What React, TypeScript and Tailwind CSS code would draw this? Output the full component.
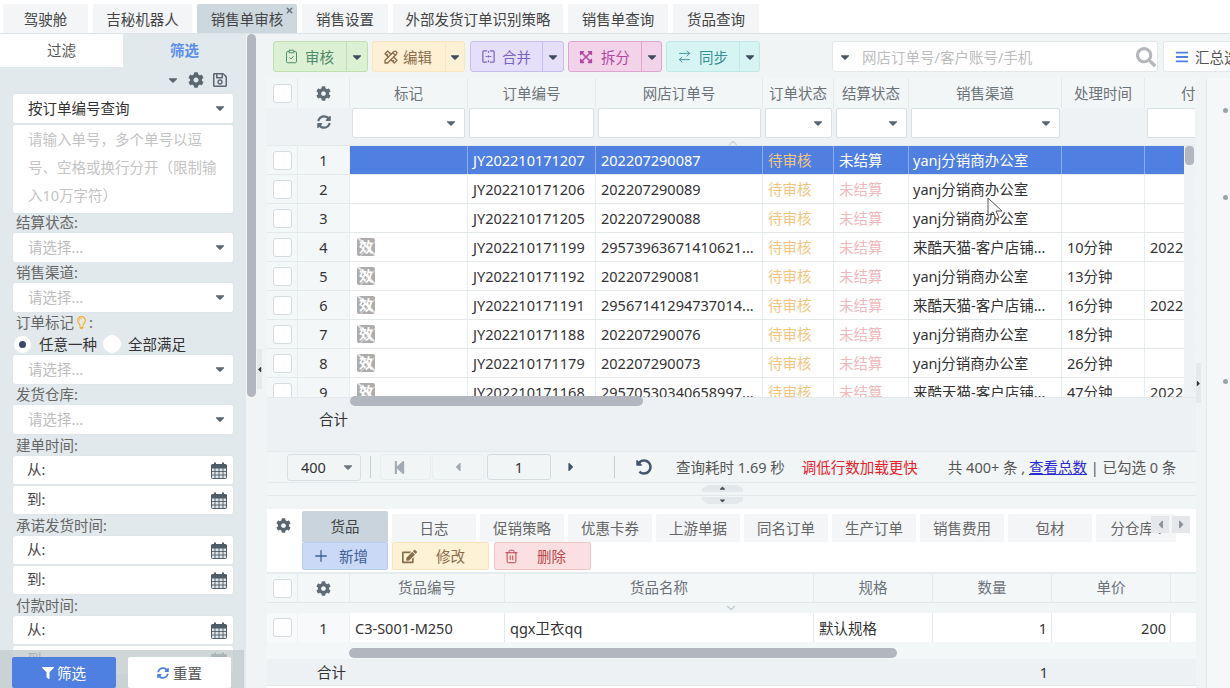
import type { ReactNode } from "react";
import { ArrowRightLeft, ChevronDown, ChevronUp, ClipboardCheck, Plus, Trash2, X } from "lucide-react";
import {
  FaBars,
  FaCaretDown,
  FaCaretLeft,
  FaCaretRight,
  FaCog,
  FaEdit,
  FaExpandArrowsAlt,
  FaFilter,
  FaRegLightbulb,
  FaRegSave,
  FaSearch,
  FaStepBackward,
  FaSyncAlt,
  FaUndoAlt,
} from "react-icons/fa";
import { TbTools } from "react-icons/tb";

const TOP_TABS = [
  { label: "驾驶舱", w: "w-[85px]" },
  { label: "吉秘机器人", w: "w-[99px]" },
  { label: "销售单审核", w: "w-[100px]", active: true },
  { label: "销售设置", w: "w-[86px]" },
  { label: "外部发货订单识别策略", w: "w-[170px]" },
  { label: "销售单查询", w: "w-[100px]" },
  { label: "货品查询", w: "w-[86px]" },
];

const SUB_TABS = [
  { label: "日志", w: "w-[84px]" },
  { label: "促销策略", w: "w-[84px]" },
  { label: "优惠卡券", w: "w-[84px]" },
  { label: "上游单据", w: "w-[84px]" },
  { label: "同名订单", w: "w-[84px]" },
  { label: "生产订单", w: "w-[84px]" },
  { label: "销售费用", w: "w-[84px]" },
  { label: "包材", w: "w-[84px]" },
  { label: "分仓库 :", w: "w-[80px]" },
];

const YANJ = "yanj分销商办公室";
const LAIKU = "来酷天猫-客户店铺...";

const ROWS = [
  { no: "JY202210171207", shop: "202207290087", channel: YANJ, time: "", pay: "" },
  { no: "JY202210171206", shop: "202207290089", channel: YANJ, time: "", pay: "" },
  { no: "JY202210171205", shop: "202207290088", channel: YANJ, time: "", pay: "" },
  { no: "JY202210171199", shop: "29573963671410621...", channel: LAIKU, time: "10分钟", pay: "2022", flag: true },
  { no: "JY202210171192", shop: "202207290081", channel: YANJ, time: "13分钟", pay: "", flag: true },
  { no: "JY202210171191", shop: "29567141294737014...", channel: LAIKU, time: "16分钟", pay: "2022", flag: true },
  { no: "JY202210171188", shop: "202207290076", channel: YANJ, time: "18分钟", pay: "", flag: true },
  { no: "JY202210171179", shop: "202207290073", channel: YANJ, time: "26分钟", pay: "", flag: true },
  { no: "JY202210171168", shop: "29570530340658997...", channel: LAIKU, time: "47分钟", pay: "2022", flag: true },
];

const MAIN_COLS = "grid grid-cols-[31px_52px_118px_128px_167px_71px_75px_153px_83px_50px]";
const SUB_COLS = "grid grid-cols-[31px_52px_155px_309px_119px_119px_119px_24px]";

function Check() {
  return <span className="block h-[19px] w-[19px] rounded-[3px] border border-[#d5dcdf] bg-white" />;
}

function CalendarIcon() {
  return (
    <svg viewBox="0 0 16 17" className="h-[17px] w-[16px] text-[#4f5c68]" fill="none" stroke="currentColor">
      <rect x="0.500" y="2.500" width="15" height="14" rx="1" fill="#dfe4e8" />
      <path d="M0.500 3h15v3h-15z" fill="currentColor" />
      <path d="M4 0.500v3M12 0.500v3" strokeWidth="2" />
      <path d="M0.500 9.500h15M0.500 13h15M4 6v10M8 6v10M12 6v10" strokeWidth="0.900" />
    </svg>
  );
}

function Select({ placeholder, value }: { placeholder?: string; value?: string }) {
  return (
    <div className="mx-[13px] flex h-[29px] items-center justify-between rounded-[2px] bg-white pb-[1px] pl-[15px] pr-[6px] shadow-[0_0_1px_#c4ced2]">
      <span className={value ? "text-[#333]" : "text-[#bdbdbd]"}>{value ?? placeholder}</span>
      <FaCaretDown className="h-[14px] w-[14px] text-[#5a6670]" />
    </div>
  );
}

function Label({ children, h = "h-[20px]" }: { children: ReactNode; h?: string }) {
  return <div className={`${h} flex items-center pl-[16px] leading-none text-[#666]`}>{children}</div>;
}

function DateField({ label }: { label: string }) {
  return (
    <div className="mx-[13px] flex h-[28px] items-center justify-between rounded-[2px] bg-white pl-[14px] pr-[6px] shadow-[0_0_1px_#c4ced2]">
      <span className="pb-[2px] text-[#444]">{label}:</span>
      <CalendarIcon />
    </div>
  );
}

function Sidebar() {
  return (
    <aside className="relative h-full w-[246px] shrink-0 overflow-hidden bg-[#e2e9ec]">
      <div className="flex h-[33px]">
        <div className="flex w-[123px] items-center justify-center bg-white pb-[2px] text-[#555]">过滤</div>
        <div className="flex w-[123px] items-center justify-center pb-[2px] font-bold text-[#5b8de8]">筛选</div>
      </div>
      <div className="flex h-[27px] items-center justify-end gap-[8px] pb-[2px] pr-[18px]">
        <FaCaretDown className="h-[14px] w-[14px] text-[#5a6670]" />
        <FaCog className="h-[16px] w-[16px] text-[#5a6670]" />
        <FaRegSave className="h-[16px] w-[16px] text-[#5a6670]" />
      </div>
      <Select value="按订单编号查询" />
      <div className="mx-[13px] mt-[2px] h-[88px] whitespace-nowrap rounded-[2px] bg-white pl-[15px] leading-[28px] text-[#c4c4c4] shadow-[0_0_1px_#c4ced2]">
        <div>请输入单号，多个单号以逗</div>
        <div>号、空格或换行分开（限制输</div>
        <div>入10万字符）</div>
      </div>
      <Label h="h-[20px] pb-[1px]">结算状态:</Label>
      <Select placeholder="请选择..." />
      <Label h="h-[21px]">销售渠道:</Label>
      <Select placeholder="请选择..." />
      <Label h="h-[21px]">
        订单标记
        <FaRegLightbulb className="mx-[1px] h-[13px] w-[13px] text-[#f4b32a]" />:
      </Label>
      <div className="flex h-[22px] items-center pl-[14px] text-[#333]">
        <span className="flex h-[17px] w-[17px] items-center justify-center rounded-full bg-white">
          <span className="h-[7px] w-[7px] rounded-full bg-[#3c4a63]" />
        </span>
        <span className="ml-[8px]">任意一种</span>
        <span className="ml-[6px] h-[18px] w-[18px] rounded-full bg-white" />
        <span className="ml-[7px]">全部满足</span>
      </div>
      <Select placeholder="请选择..." />
      <Label h="h-[21px]">发货仓库:</Label>
      <Select placeholder="请选择..." />
      <Label h="h-[22px]">建单时间:</Label>
      <div className="flex flex-col gap-[2px]">
        <DateField label="从" />
        <DateField label="到" />
      </div>
      <Label h="h-[22px]">承诺发货时间:</Label>
      <div className="flex flex-col gap-[2px]">
        <DateField label="从" />
        <DateField label="到" />
      </div>
      <Label h="h-[22px]">付款时间:</Label>
      <div className="flex flex-col gap-[2px]">
        <DateField label="从" />
        <DateField label="到" />
      </div>
      <div className="absolute bottom-0 left-0 flex h-[38px] w-[244px] items-start justify-between bg-[#c3ccce]/80 pl-[12px] pr-[13px] pt-[7px]">
        <button className="flex h-[31px] w-[104px] items-center justify-center gap-[3px] rounded-[2px] bg-[#4f7fe0] text-white">
          <FaFilter className="h-[12px] w-[12px]" />
          筛选
        </button>
        <button className="flex h-[31px] w-[103px] items-center justify-center gap-[4px] rounded-[2px] bg-white text-[#555]">
          <FaSyncAlt className="h-[12px] w-[12px] text-[#4f7fe0]" />
          重置
        </button>
      </div>
    </aside>
  );
}

function MergeIcon() {
  return (
    <svg viewBox="0 0 16 16" className="h-[15px] w-[15px]" fill="none" stroke="currentColor" strokeWidth="1.3">
      <path d="M6.500 2H3a1 1 0 0 0-1 1v10a1 1 0 0 0 1 1h3.500M9.500 2H13a1 1 0 0 1 1 1v10a1 1 0 0 1-1 1H9.500" />
      <path d="M8 2v2M8 7v2M8 12v2M5 8h2M9 8h2" />
    </svg>
  );
}

function ActionButton({
  icon,
  label,
  box,
  text,
  main,
}: {
  icon: ReactNode;
  label: string;
  box: string;
  text: string;
  main: string;
}) {
  return (
    <div className={`flex h-[31px] items-stretch rounded-[3px] border ${box}`}>
      <div className={`flex items-center pl-[10px] ${main} ${text}`}>
        {icon}
        <span>{label}</span>
      </div>
      <div className="flex flex-1 items-center justify-center border-l border-inherit">
        <FaCaretDown className="h-[14px] w-[14px] text-[#3f4c5c]" />
      </div>
    </div>
  );
}

function Toolbar() {
  return (
    <div className="flex h-[44px] shrink-0 items-start bg-[#f0f4f5] pl-[6px] pt-[7px]">
      <div className="w-[95px]">
        <ActionButton
          main="w-[72px] gap-[6px]"
          box="border-[#bfe0ae] bg-[#dcf0d3]"
          text="text-[#4f8a6a]"
          label="审核"
          icon={<ClipboardCheck className="h-[15px] w-[15px]" strokeWidth={1.6} />}
        />
      </div>
      <div className="ml-[4px] w-[93px]">
        <ActionButton
          main="w-[72px] gap-[4px]"
          box="border-[#f9e6c0] bg-[#fdf0d5]"
          text="text-[#8a6d4b]"
          label="编辑"
          icon={<TbTools className="h-[16px] w-[16px]" />}
        />
      </div>
      <div className="ml-[5px] w-[94px]">
        <ActionButton
          main="w-[71px] gap-[6px]"
          box="border-[#c9bdec] bg-[#e6dffa]"
          text="text-[#7a62c4]"
          label="合并"
          icon={<MergeIcon />}
        />
      </div>
      <div className="ml-[4px] w-[94px]">
        <ActionButton
          main="w-[72px] gap-[8px]"
          box="border-[#dda6d2] bg-[#f3d3ea]"
          text="text-[#b04aa0]"
          label="拆分"
          icon={<FaExpandArrowsAlt className="h-[14px] w-[14px]" />}
        />
      </div>
      <div className="ml-[4px] w-[94px]">
        <ActionButton
          main="w-[72px] gap-[7px]"
          box="border-[#bfe9e6] bg-[#d6f5f2]"
          text="text-[#3a8f95]"
          label="同步"
          icon={<ArrowRightLeft className="h-[15px] w-[15px]" strokeWidth={1.5} />}
        />
      </div>
      <div className="ml-[72px] flex h-[31px] w-[326px] items-center rounded-[3px] border border-[#e3e8ea] bg-white pl-[5px] pr-[1px]">
        <FaCaretDown className="h-[14px] w-[14px] text-[#4b5560]" />
        <span className="ml-[10px] flex-1 text-[#bdbdbd]">网店订单号/客户账号/手机</span>
        <FaSearch className="h-[20px] w-[20px] text-[#b4b7bb]" />
      </div>
      <div className="ml-[5px] flex h-[31px] flex-1 items-center overflow-hidden whitespace-nowrap rounded-l-[3px] border border-r-0 border-[#e3e8ea] bg-white pl-[11px] text-[#555]">
        <FaBars className="mr-[6px] h-[14px] w-[14px] shrink-0 text-[#4f7fe0]" />
        汇总选
      </div>
    </div>
  );
}

function FilterBox({ caret, className = "" }: { caret?: boolean; className?: string }) {
  return (
    <div
      className={`flex h-[30px] items-center justify-end rounded-[2px] border border-[#d9e0e3] bg-white pr-[6px] ${className}`}
    >
      {caret && <FaCaretDown className="h-[14px] w-[14px] text-[#5a6670]" />}
    </div>
  );
}

function InvalidStamp() {
  return (
    <span className="relative flex h-[18px] w-[18px] items-center justify-center overflow-hidden rounded-[2px] bg-[#adadad] text-[14px] font-bold leading-none text-white">
      效
      <span className="absolute left-[-3px] top-[8px] h-[2px] w-[26px] rotate-45 bg-white/70" />
      <span className="absolute left-[-3px] top-[11px] h-[1px] w-[26px] -rotate-45 bg-white/50" />
    </span>
  );
}

function OrderRow({ row, index }: { row: (typeof ROWS)[number]; index: number }) {
  const selected = index === 0;
  const cell = `flex items-center overflow-hidden whitespace-nowrap border-r pb-[1px] ${
    selected ? "border-[#8fabe8] bg-[#4f7fe0] text-white" : "border-[#e8edef] bg-white text-[#333]"
  }`;
  return (
    <div className={`${MAIN_COLS} h-[29px] border-b border-[#e4e9eb]`}>
      <div className="flex items-center justify-center border-r border-[#e8edef] bg-[#f4f7f8]">
        <Check />
      </div>
      <div className="flex items-center justify-center border-r border-[#e8edef] bg-[#f4f7f8] pb-[1px] text-[#333]">
        {index + 1}
      </div>
      <div className={`${cell} pl-[7px]`}>{row.flag && <InvalidStamp />}</div>
      <div className={`${cell} pl-[5px]`}>{row.no}</div>
      <div className={`${cell} pl-[5px]`}>{row.shop}</div>
      <div className={`${cell} pl-[5px] !text-[#f3c680]`}>待审核</div>
      <div className={`${cell} pl-[5px] ${selected ? "" : "!text-[#f0b9bd]"}`}>未结算</div>
      <div className={`${cell} pl-[4px]`}>{row.channel}</div>
      <div className={`${cell} pl-[5px]`}>{row.time}</div>
      <div className={`${cell} w-[39px] border-r-0 pl-[5px]`}>{row.pay}</div>
    </div>
  );
}

function OrderTable() {
  const headers = ["标记", "订单编号", "网店订单号", "订单状态", "结算状态", "销售渠道", "处理时间"];
  return (
    <div className="relative shrink-0">
      <div className={`${MAIN_COLS} h-[30px] bg-[#f3f6f7] text-[#6b7378]`}>
        <div className="flex items-center justify-center border-r border-[#e4e9eb]">
          <Check />
        </div>
        <div className="flex items-center justify-center border-r border-[#e4e9eb]">
          <FaCog className="h-[15px] w-[15px] text-[#5f6b75]" />
        </div>
        {headers.map((h) => (
          <div key={h} className="flex items-center justify-center whitespace-nowrap border-r border-[#e4e9eb] pb-[1px]">
            {h}
          </div>
        ))}
        <div className="flex items-center overflow-hidden whitespace-nowrap pb-[1px] pl-[36px]">付</div>
      </div>
      <div className={`${MAIN_COLS} h-[38px] border-b border-[#e4e9eb] bg-[#eef2f4]`}>
        <div />
        <div className="flex h-[28px] items-center justify-center">
          <FaSyncAlt className="h-[14px] w-[14px] text-[#5f6b75]" />
        </div>
        <FilterBox caret className="ml-[2px] mr-[3px]" />
        <FilterBox className="ml-[1px] mr-[2px]" />
        <FilterBox className="mx-[2px]" />
        <FilterBox caret className="mx-[2px]" />
        <FilterBox caret className="mx-[2px]" />
        <FilterBox caret className="mx-[2px]" />
        <div />
        <FilterBox className="ml-[2px] rounded-r-none border-r-0" />
      </div>
      <div className="h-[251px] overflow-hidden">
        {ROWS.map((row, i) => (
          <OrderRow key={row.no} row={row} index={i} />
        ))}
      </div>
      <ChevronUp className="absolute left-[459px] top-[58px] h-[14px] w-[14px] text-[#ccd3d6]" />
      <div className="absolute left-[917px] top-[68px] h-[251px] w-[11px] bg-[#eef2f4]">
        <div className="ml-[1px] h-[19px] w-[9px] rounded-[4px] bg-[#b2b7bf]" />
      </div>
      <div className="absolute left-[83px] top-[318px] h-[10px] w-[293px] rounded-[5px] bg-[#b2b7bf]" />
      <svg viewBox="0 0 16 24" className="absolute left-[720px] top-[119px] h-[24px] w-[16px]" fill="#fff" stroke="#555">
        <path d="M1 1v18l5-4 3 7 3-1-3-7h6z" />
      </svg>
    </div>
  );
}

function Pager() {
  return (
    <div className="flex h-[32px] shrink-0 items-center border-y border-[#e4e9eb] bg-[#f2f5f6] pl-[20px] text-[#555]">
      <div className="flex h-[27px] w-[74px] items-center justify-between rounded-[3px] border border-[#d9e0e3] pl-[13px] pr-[5px] text-[#333]">
        400
        <FaCaretDown className="h-[14px] w-[14px] text-[#6c7680]" />
      </div>
      <span className="ml-[9px] h-[22px] w-px bg-[#c7ced2]" />
      <div className="ml-[9px] flex h-[26px] w-[51px] items-center justify-center rounded-[3px] border border-[#e8edef] pr-[12px]">
        <FaStepBackward className="h-[15px] w-[15px] text-[#a4aab4]" />
      </div>
      <div className="ml-[1px] flex h-[26px] w-[52px] items-center justify-center rounded-[3px] border border-[#e8edef]">
        <FaCaretLeft className="h-[14px] w-[14px] text-[#a4aab4]" />
      </div>
      <div className="ml-[3px] flex h-[26px] w-[64px] items-center justify-center rounded-[3px] border border-[#d5dcdf] text-[#333]">
        1
      </div>
      <FaCaretRight className="ml-[13px] h-[14px] w-[14px] text-[#44546a]" />
      <span className="ml-[36px] h-[22px] w-px bg-[#c7ced2]" />
      <FaUndoAlt className="ml-[21px] h-[16px] w-[16px] text-[#44546a]" />
      <span className="ml-[24px] whitespace-nowrap">查询耗时 1.69 秒</span>
      <span className="ml-[17px] whitespace-nowrap text-[#e8202a]">调低行数加载更快</span>
      <span className="ml-[30px] whitespace-nowrap">
        共 400+ 条 , <span className="text-[#2a2ad0] underline">查看总数</span> | 已勾选 0 条
      </span>
    </div>
  );
}

function SplitHandle() {
  return (
    <div className="relative h-[26px] shrink-0 bg-[#f2f5f6]">
      <div className="pt-[12px]">
        <div className="border-t border-[#e4e9eb]" />
      </div>
      <div className="absolute left-[435px] top-[2px] flex h-[7px] w-[41px] items-center justify-center bg-[#e4e8ea] [clip-path:polygon(15%_0,85%_0,100%_50%,100%_100%,0_100%,0_50%)]">
        <FaCaretDown className="h-[9px] w-[9px] rotate-180 text-[#44505c]" />
      </div>
      <div className="absolute left-[435px] top-[14px] flex h-[7px] w-[41px] items-center justify-center bg-[#e4e8ea] [clip-path:polygon(0_0,100%_0,100%_50%,85%_100%,15%_100%,0_50%)]">
        <FaCaretDown className="h-[9px] w-[9px] text-[#44505c]" />
      </div>
    </div>
  );
}

function SmallButton({
  icon,
  label,
  cls,
  gap,
}: {
  icon: ReactNode;
  label: string;
  cls: string;
  gap: string;
}) {
  return (
    <div className={`flex h-[28px] items-center rounded-[2px] border pl-[9px] ${gap} ${cls}`}>
      {icon}
      <span>{label}</span>
    </div>
  );
}

function DetailPanel() {
  return (
    <div className="relative flex-1 overflow-hidden bg-white">
      <div className="flex h-[33px] items-start pt-[2px]">
        <div className="flex h-[30px] w-[35px] items-start justify-end pr-[11px] pt-[7px]">
          <FaCog className="h-[15px] w-[15px] text-[#5a6670]" />
        </div>
        <div className="flex h-[31px] w-[86px] items-center justify-center rounded-t-[2px] bg-[#c9d4dc] pb-[2px] text-[#444]">
          货品
        </div>
        <div className="ml-[4px] mt-[3px] flex gap-[4px]">
          {SUB_TABS.map((t) => (
            <div
              key={t.label}
              className={`flex h-[28px] items-center justify-center whitespace-nowrap rounded-t-[2px] bg-[#f3f5f6] pb-[1px] text-[#666] ${t.w}`}
            >
              {t.label}
            </div>
          ))}
        </div>
      </div>
      <div className="absolute left-[884px] top-[7px] flex gap-[3px]">
        <div className="flex h-[17px] w-[18px] items-center justify-center bg-[#e6e7ea]">
          <FaCaretLeft className="h-[13px] w-[13px] text-[#8b9099]" />
        </div>
        <div className="flex h-[17px] w-[18px] items-center justify-center bg-[#e6e7ea]">
          <FaCaretRight className="h-[13px] w-[13px] text-[#8b9099]" />
        </div>
      </div>
      <div className="flex h-[30px] items-start pl-[35px]">
        <div className="w-[86px]">
          <SmallButton
            label="新增"
            gap="gap-[9px]"
            cls="border-[#b9cdf0] bg-[#cadaf6] text-[#3f5f96]"
            icon={<Plus className="h-[18px] w-[18px]" strokeWidth={1.7} />}
          />
        </div>
        <div className="ml-[4px] w-[97px]">
          <SmallButton
            label="修改"
            gap="gap-[19px]"
            cls="border-[#f7e4bb] bg-[#fdf1d6] text-[#8a6d4b]"
            icon={<FaEdit className="h-[15px] w-[15px]" />}
          />
        </div>
        <div className="ml-[5px] w-[97px]">
          <SmallButton
            label="删除"
            gap="gap-[18px]"
            cls="border-[#f1c6c8] bg-[#fae0e1] text-[#b9474d]"
            icon={<Trash2 className="h-[15px] w-[15px]" strokeWidth={1.6} />}
          />
        </div>
      </div>
      <div className={`${SUB_COLS} h-[30px] border-t-[2px] border-[#e6ebed] bg-[#f4f7f8] text-[#6b7378]`}>
        <div className="flex items-center justify-center border-r border-[#e4e9eb]">
          <Check />
        </div>
        <div className="flex items-center justify-center border-r border-[#e4e9eb]">
          <FaCog className="h-[15px] w-[15px] text-[#5f6b75]" />
        </div>
        {["货品编号", "货品名称", "规格", "数量", "单价"].map((h) => (
          <div key={h} className="flex items-center justify-center border-r border-[#e4e9eb] pb-[2px]">
            {h}
          </div>
        ))}
        <div />
      </div>
      <div className="relative h-[11px] border-t border-[#e4e9eb] bg-[#f2f5f6]">
        <ChevronDown className="absolute left-[457px] top-[-2px] h-[14px] w-[14px] text-[#c2c9cd]" />
      </div>
      <div className={`${SUB_COLS} h-[29px] text-[#333]`}>
        <div className="flex items-center justify-center border-r border-[#eef1f3] bg-[#f7f9fa]">
          <Check />
        </div>
        <div className="flex items-center justify-center border-r border-[#eef1f3] bg-[#f7f9fa]">1</div>
        <div className="flex items-center border-r border-[#e4e9eb] pl-[5px]">C3-S001-M250</div>
        <div className="flex items-center border-r border-[#e4e9eb] pl-[5px]">qgx卫衣qq</div>
        <div className="flex items-center border-r border-[#e4e9eb] pl-[5px]">默认规格</div>
        <div className="flex items-center justify-end border-r border-[#e4e9eb] pr-[4px]">1</div>
        <div className="flex items-center justify-end border-r border-[#e4e9eb] pr-[4px]">200</div>
        <div />
      </div>
      <div className="h-[17px] bg-[#f4f7f8] pl-[82px] pt-[6px]">
        <div className="h-[10px] w-[548px] rounded-[5px] bg-[#b2b7bf]" />
      </div>
      <div className={`${SUB_COLS} h-[27px] border-b border-[#e4e9eb] bg-[#edf1f3] pb-[1px] text-[#333]`}>
        <div className="col-span-2 flex items-center justify-end pr-[4px]">合计</div>
        <div />
        <div />
        <div />
        <div className="flex items-center justify-end pr-[4px]">1</div>
      </div>
    </div>
  );
}

export default function App() {
  return (
    <div className="flex h-[688px] w-[1230px] flex-col overflow-hidden bg-white font-['Noto_Sans','Noto_Sans_CJK_SC',sans-serif] text-[14.5px] leading-[20px]">
      <div className="flex h-[34px] shrink-0 items-end gap-[5px] border-b border-[#dde4e7] pl-[3px]">
        {TOP_TABS.map((t) => (
          <div
            key={t.label}
            className={`relative flex h-[29px] items-center justify-center whitespace-nowrap rounded-t-[2px] text-[#444] ${t.w} ${
              t.active ? "bg-[#cdd7de] text-[#333]" : "bg-[#f3f5f6]"
            }`}
          >
            {t.label}
            {t.active && <X className="absolute right-[3px] top-[2px] h-[9px] w-[9px] text-[#68727c]" strokeWidth={4} />}
          </div>
        ))}
      </div>

      <div className="relative flex min-h-0 flex-1 bg-[#f0f4f5]">
        <Sidebar />
        <div className="h-full w-[21px] shrink-0 pl-[1px]">
          <div className="h-[363px] w-[9px] rounded-[5px] bg-[#b2b7bf]" />
        </div>
        <div className="flex min-w-0 flex-1 flex-col">
          <Toolbar />
          <div className="flex min-h-0 flex-1">
            <div className="flex w-[929px] shrink-0 flex-col">
              <OrderTable />
              <div className="h-[54px] shrink-0 border-t border-[#e4e9eb] bg-[#edf1f3] pl-[52px] pt-[11px] text-[#333]">
                合计
              </div>
              <Pager />
              <SplitHandle />
              <DetailPanel />
            </div>
            <div className="ml-[10px] flex flex-1 flex-col items-end gap-[82px] border-l border-[#e4e9eb] bg-[#f5f7f8] pr-[2px] pt-[30px]">
              <span className="h-[5px] w-[5px] rounded-full bg-[#9aa5aa]" />
              <span className="h-[5px] w-[5px] rounded-full bg-[#9aa5aa]" />
              <span className="mt-[97px] h-[5px] w-[5px] rounded-full bg-[#9aa5aa]" />
            </div>
          </div>
        </div>
        <div className="absolute left-[257px] top-[315px] flex h-[40px] w-[5px] items-center justify-center bg-[#e6e9eb]">
          <FaCaretLeft className="h-[9px] w-[9px] shrink-0 text-[#333]" />
        </div>
        <div className="absolute left-[1196px] top-[329px] flex h-[40px] w-[5px] items-center justify-center bg-[#e6e9eb]">
          <FaCaretRight className="h-[9px] w-[9px] shrink-0 text-[#333]" />
        </div>
      </div>
    </div>
  );
}
